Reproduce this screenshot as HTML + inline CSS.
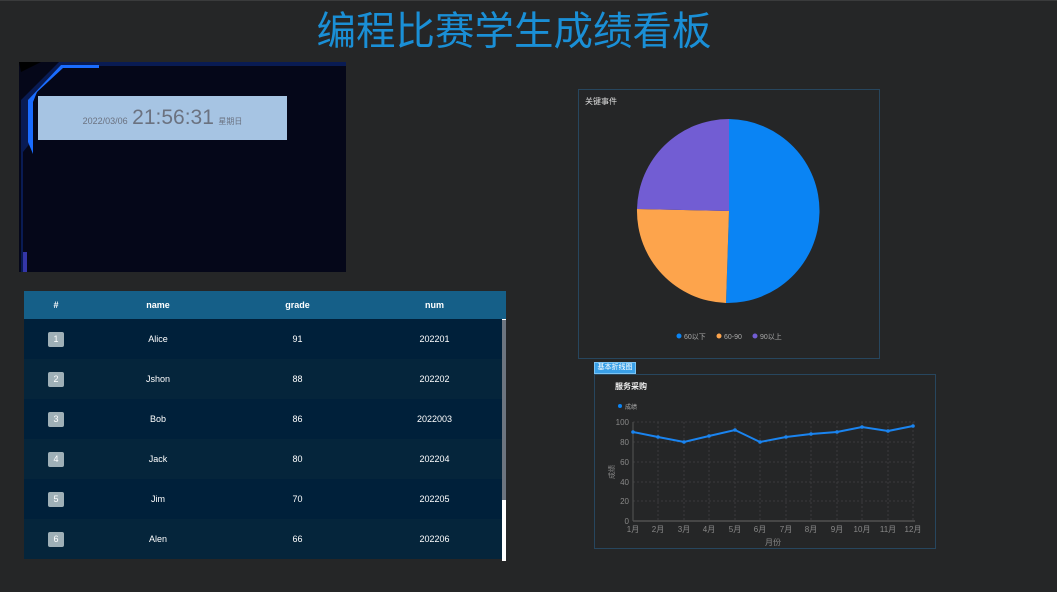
<!DOCTYPE html>
<html><head><meta charset="utf-8"><style>
body{margin:0;width:1057px;height:592px;background:#252627;position:relative;overflow:hidden;font-family:"Liberation Sans","Noto Sans CJK SC",sans-serif;}
.abs{position:absolute}
.title{left:0;width:1028px;top:8px;text-align:center;color:#1a8fd6;font-size:39.5px;line-height:48px;}
table{border-collapse:collapse;width:478px;font-size:9px;color:#fff;}
td,th{text-align:center;padding:0}
th{height:28px;background:#155f88;font-weight:bold}
td{height:40px}
tr.o td{background:#00203a}
tr.e td{background:#05253b}
.b{display:inline-block;width:16px;height:15px;line-height:15px;background:#9fb0b7;border-radius:2px;color:#fff}
</style></head><body>
<div style="position:absolute;left:0;top:0;width:1057px;height:1px;background:#3a3b3c"></div>
<div class="abs title">编程比赛学生成绩看板</div>

<div class="abs" style="left:19px;top:62px;width:327px;height:210px;background:#050719;overflow:hidden">
<svg class="abs" style="left:0;top:0" width="327" height="210">
<path d="M0 0 H327 V210 H0Z" fill="#050719"/>
<path d="M2 10 L22 0 L0 0Z" fill="#000"/>
<path d="M44 0 H327 V4 H46 L21 26 L12 40 L12 80 L4 90 L4 210 L2 210 L2 38 L40 0Z" fill="#0b2a7a" opacity=".6"/>
<path d="M42 3 H80 L80 6 H44 L18 30 L14 40 L14 60 L9 55 L9 38Z" fill="#1a6cff"/>
<path d="M9 38 L14 40 L14 92 L9 80Z" fill="#1a6cff"/>
<path d="M4 190 H8 V210 H4Z" fill="#3436a8"/>
</svg>
<div class="abs" style="left:19px;top:34px;width:249px;height:44px;background:#a6c4e3;text-align:center;color:#6b7280;line-height:44px;white-space:nowrap">
<span style="font-size:9px">2022/03/06</span> <span style="font-size:21px">21:56:31</span> <span style="font-size:8px">星期日</span></div>
</div>

<div class="abs" style="left:24px;top:291px;width:482px;height:270px;overflow:hidden">
<table>
<tr><th style="width:64px">#</th><th style="width:140px">name</th><th style="width:139px">grade</th><th>num</th></tr>
<tr class="o"><td><span class="b">1</span></td><td>Alice</td><td>91</td><td>202201</td></tr>
<tr class="e"><td><span class="b">2</span></td><td>Jshon</td><td>88</td><td>202202</td></tr>
<tr class="o"><td><span class="b">3</span></td><td>Bob</td><td>86</td><td>2022003</td></tr>
<tr class="e"><td><span class="b">4</span></td><td>Jack</td><td>80</td><td>202204</td></tr>
<tr class="o"><td><span class="b">5</span></td><td>Jim</td><td>70</td><td>202205</td></tr>
<tr class="e"><td><span class="b">6</span></td><td>Alen</td><td>66</td><td>202206</td></tr>
</table>
<div class="abs" style="left:478px;top:0;width:4px;height:28px;background:#155f88"></div>
<div class="abs" style="left:478px;top:28px;width:4px;height:242px;background:#fff"></div>
<div class="abs" style="left:478px;top:29px;width:4px;height:180px;background:#6d7580"></div>
</div>

<div class="abs" style="left:578px;top:89px;width:300px;height:268px;border:1px solid #27465e"></div>
<div class="abs" style="left:585px;top:96px;font-size:8px;color:#ddd">关键事件</div>
<svg class="abs" style="left:0;top:0" width="1057" height="592">
<path d="M729 211 L729 119 A92 92 0 1 1 726 303Z" fill="#0a84f4"/>
<path d="M729 211 L726 303 A92 92 0 0 1 637 209Z" fill="#fda44c"/>
<path d="M729 211 L637 209 A92 92 0 0 1 729 119Z" fill="#725dd3"/>
<circle cx="679" cy="336" r="2.5" fill="#0a84f4"/><text x="684" y="339" font-size="7" fill="#aaa">60以下</text>
<circle cx="719" cy="336" r="2.5" fill="#fda44c"/><text x="724" y="339" font-size="7" fill="#aaa">60-90</text>
<circle cx="755" cy="336" r="2.5" fill="#725dd3"/><text x="760" y="339" font-size="7" fill="#aaa">90以上</text>
</svg>

<div class="abs" style="left:594px;top:362px;width:40px;height:10px;background:#3aa0e8;border:1px solid #7cc4f4;font-size:7px;color:#fff;line-height:10px;text-align:center">基本折线图</div>
<div class="abs" style="left:594px;top:374px;width:340px;height:173px;border:1px solid #27465e"></div>
<svg class="abs" style="left:0;top:0" width="1057" height="592" font-family="Liberation Sans, Noto Sans CJK SC, sans-serif">
<text x="615" y="389" font-size="8" fill="#eee" font-weight="bold">服务采购</text>
<circle cx="620" cy="406" r="2" fill="#0a84f4"/><text x="625" y="409" font-size="6" fill="#aaa">成绩</text>
<g stroke="#3a3b3c" stroke-dasharray="2,2" stroke-width="1">
<line x1="633" y1="422" x2="915" y2="422"/><line x1="633" y1="442" x2="915" y2="442"/><line x1="633" y1="462" x2="915" y2="462"/><line x1="633" y1="482" x2="915" y2="482"/><line x1="633" y1="501" x2="915" y2="501"/>
<line x1="658" y1="422" x2="658" y2="521"/><line x1="684" y1="422" x2="684" y2="521"/><line x1="709" y1="422" x2="709" y2="521"/><line x1="735" y1="422" x2="735" y2="521"/><line x1="760" y1="422" x2="760" y2="521"/><line x1="786" y1="422" x2="786" y2="521"/><line x1="811" y1="422" x2="811" y2="521"/><line x1="837" y1="422" x2="837" y2="521"/><line x1="862" y1="422" x2="862" y2="521"/><line x1="888" y1="422" x2="888" y2="521"/><line x1="913" y1="422" x2="913" y2="521"/>
</g>
<line x1="633" y1="521" x2="915" y2="521" stroke="#666"/>
<line x1="633" y1="422" x2="633" y2="521" stroke="#555"/>
<g font-size="8" fill="#888" text-anchor="end">
<text x="629" y="425">100</text><text x="629" y="445">80</text><text x="629" y="465">60</text><text x="629" y="485">40</text><text x="629" y="504">20</text><text x="629" y="524">0</text></g>
<g font-size="8" fill="#888" text-anchor="middle">
<text x="633" y="532">1月</text><text x="658" y="532">2月</text><text x="684" y="532">3月</text><text x="709" y="532">4月</text><text x="735" y="532">5月</text><text x="760" y="532">6月</text><text x="786" y="532">7月</text><text x="811" y="532">8月</text><text x="837" y="532">9月</text><text x="862" y="532">10月</text><text x="888" y="532">11月</text><text x="913" y="532">12月</text>
<text x="773" y="545">月份</text></g>
<text x="614" y="472" font-size="7" fill="#888" transform="rotate(-90 614 472)" text-anchor="middle">成绩</text>
<polyline fill="none" stroke="#1a84f0" stroke-width="2" points="633,432 658,437 684,442 709,436 735,430 760,442 786,437 811,434 837,432 862,427 888,431 913,426"/>
<g fill="#1a84f0"><circle cx="633" cy="432" r="1.8"/><circle cx="658" cy="437" r="1.8"/><circle cx="684" cy="442" r="1.8"/><circle cx="709" cy="436" r="1.8"/><circle cx="735" cy="430" r="1.8"/><circle cx="760" cy="442" r="1.8"/><circle cx="786" cy="437" r="1.8"/><circle cx="811" cy="434" r="1.8"/><circle cx="837" cy="432" r="1.8"/><circle cx="862" cy="427" r="1.8"/><circle cx="888" cy="431" r="1.8"/><circle cx="913" cy="426" r="1.8"/></g>
</svg>
</body></html>
